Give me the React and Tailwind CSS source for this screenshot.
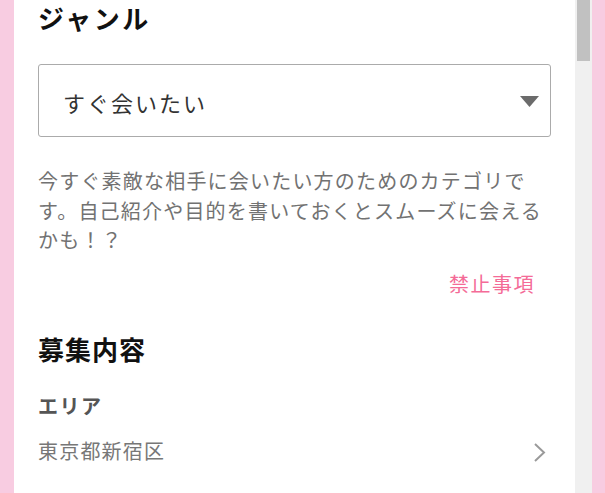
import React from 'react';

const font = { fontFamily: '"Noto Sans CJK JP", "Noto Sans", sans-serif' };

const GenreSelect = () => (
  <div className="mt-[28px] flex h-[73px] items-center justify-between rounded-[3px] border border-[#ababab] pl-6 pr-[11px]">
    <span className="pt-[3px] text-[22px] leading-[30px] tracking-[2px] text-[#333]">すぐ会いたい</span>
    <svg width="19" height="11" viewBox="0 0 19 11" className="mt-[1px]">
      <polygon points="0,0 19,0 9.5,11" fill="#6b6b6b" />
    </svg>
  </div>
);

export default function App() {
  return (
    <div className="flex h-[493px] w-full overflow-hidden bg-[#f8cce1]" style={font}>
      <div className="w-[14px] shrink-0" />

      <div className="w-[561px] shrink-0 bg-white px-6">
        {/* ジャンル */}
        <h2 className="text-[26px] font-bold leading-[36px] tracking-[2.5px] text-[#111]">ジャンル</h2>
        <GenreSelect />
        <p className="mt-[29px] text-[20px] leading-[29.5px] tracking-[1.2px] text-[#727272]">
          今すぐ素敵な相手に会いたい方のためのカテゴリです。自己紹介や目的を書いておくとスムーズに会えるかも！？
        </p>
        <div className="mt-[14px] pr-[16px] text-right text-[20px] leading-[30px] tracking-[1.5px] text-[#f46b97]">
          禁止事項
        </div>

        {/* 募集内容 */}
        <h2 className="mt-[32px] text-[26px] font-bold leading-[36px] tracking-[1px] text-[#111]">募集内容</h2>
        <div className="mt-[24px] text-[20px] font-bold leading-[30px] tracking-[1.5px] text-[#555]">エリア</div>
        <div className="mt-[15px] flex items-center justify-between pr-[5px]">
          <span className="text-[20px] leading-[30px] tracking-[1.2px] text-[#777]">東京都新宿区</span>
          <svg width="13" height="21" viewBox="0 0 13 21" className="mt-[4px]">
            <polyline points="2,2 11,10.5 2,19" fill="none" stroke="#9a9a9a" strokeWidth="2" />
          </svg>
        </div>
      </div>

      {/* scrollbar */}
      <div className="w-[17px] shrink-0 bg-[#f0f0f0] px-[2px]">
        <div className="h-[61px] bg-[#c1c1c1]" />
      </div>

      <div className="flex-1" />
    </div>
  );
}
